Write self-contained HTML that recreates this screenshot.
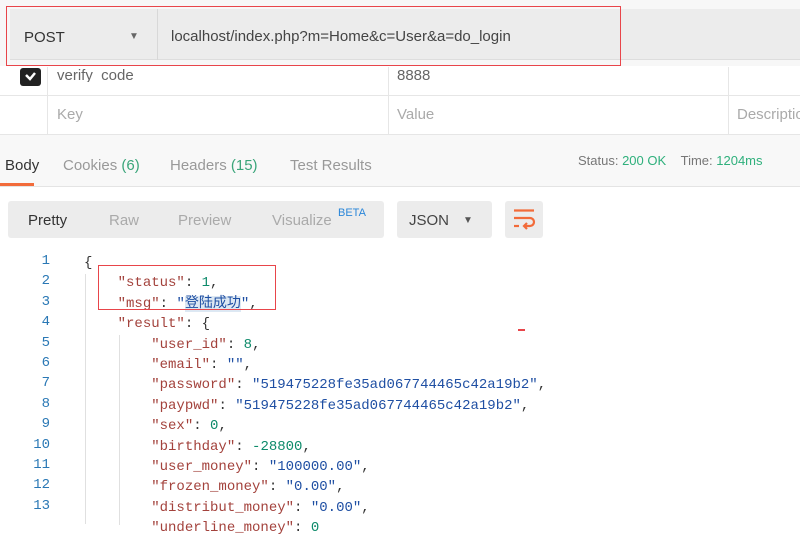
<!DOCTYPE html>
<html><head><meta charset="utf-8">
<style>
*{margin:0;padding:0;box-sizing:border-box}
body{width:800px;height:524px;overflow:hidden;background:#fff;font-family:"Liberation Sans",sans-serif;position:relative}
.abs{position:absolute}
.mono{font-family:"Liberation Mono","Noto Sans CJK SC",monospace;font-size:14px}
.k{color:#a3423c}.s{color:#1f4fa3}.n{color:#0d8a6a}.p{color:#333}
.ln{position:absolute;width:50px;text-align:right;color:#2a78b5;font-family:"Liberation Mono",monospace;font-size:14px}
</style></head><body>
<div class="abs" style="left:0;top:0;width:800px;height:66px;background:#f7f7f7"></div>
<div class="abs" style="left:10px;top:9px;width:790px;height:51px;background:#ececec;border-bottom:1px solid #ddd"></div>
<div class="abs" style="left:157px;top:9px;width:1px;height:51px;background:#d8d8d8"></div>
<div class="abs" style="left:24px;top:29px;font-size:15px;color:#333">POST</div>
<div class="abs" style="left:129px;top:31px;font-size:10px;color:#666">▼</div>
<div class="abs" style="left:171px;top:28px;font-size:15px;color:#444">localhost/index.php?m=Home&amp;c=User&amp;a=do_login</div>
<div class="abs" style="left:6px;top:6px;width:615px;height:60px;border:1.5px solid #e8454a"></div>
<div class="abs" style="left:0;top:95px;width:800px;height:1px;background:#e6e6e6"></div>
<div class="abs" style="left:0;top:134px;width:800px;height:1px;background:#e6e6e6"></div>
<div class="abs" style="left:47px;top:67px;width:1px;height:68px;background:#e6e6e6"></div>
<div class="abs" style="left:388px;top:67px;width:1px;height:68px;background:#e6e6e6"></div>
<div class="abs" style="left:728px;top:67px;width:1px;height:68px;background:#e6e6e6"></div>
<div class="abs" style="left:20px;top:68px;width:21px;height:18px;background:#222;border-radius:3px"></div>
<svg class="abs" style="left:20px;top:68px" width="21" height="18"><path d="M6 7l4 4 5-6" stroke="#fff" stroke-width="2.5" fill="none"/></svg>
<div class="abs" style="left:57px;top:66px;font-size:15px;color:#666;height:16px;overflow:hidden;line-height:16px;padding-top:2px">verify_code</div>
<div class="abs" style="left:397px;top:66px;font-size:15px;color:#666;height:16px;overflow:hidden;line-height:16px;padding-top:2px">8888</div>
<div class="abs" style="left:57px;top:106px;font-size:15px;color:#aaa">Key</div>
<div class="abs" style="left:397px;top:106px;font-size:15px;color:#aaa">Value</div>
<div class="abs" style="left:737px;top:106px;font-size:15px;color:#aaa;white-space:nowrap">Description</div>
<div class="abs" style="left:0;top:135px;width:800px;height:52px;background:#f8f8f8;border-bottom:1px solid #e4e4e4"></div>
<div class="abs" style="left:5px;top:157px;font-size:15px;color:#333">Body</div>
<div class="abs" style="left:0;top:183px;width:34px;height:3px;background:#f26b3a"></div>
<div class="abs" style="left:63px;top:157px;font-size:15px;color:#999">Cookies <span style="color:#3aa57a">(6)</span></div>
<div class="abs" style="left:170px;top:157px;font-size:15px;color:#999">Headers <span style="color:#3aa57a">(15)</span></div>
<div class="abs" style="left:290px;top:157px;font-size:15px;color:#999">Test Results</div>
<div class="abs" style="left:578px;top:153px;font-size:13px;color:#777">Status: <span style="color:#2fb07c">200 OK</span>&nbsp;&nbsp;&nbsp;&nbsp;Time: <span style="color:#2fb07c">1204ms</span></div>
<div class="abs" style="left:8px;top:201px;width:376px;height:37px;background:#ececec;border-radius:3px"></div>
<div class="abs" style="left:28px;top:212px;font-size:15px;color:#333">Pretty</div>
<div class="abs" style="left:109px;top:212px;font-size:15px;color:#aaa">Raw</div>
<div class="abs" style="left:178px;top:212px;font-size:15px;color:#aaa">Preview</div>
<div class="abs" style="left:272px;top:212px;font-size:15px;color:#aaa">Visualize</div>
<div class="abs" style="left:338px;top:207px;font-size:11px;color:#2a86d9">BETA</div>
<div class="abs" style="left:397px;top:201px;width:95px;height:37px;background:#ececec;border-radius:3px"></div>
<div class="abs" style="left:409px;top:212px;font-size:15px;color:#444">JSON</div>
<div class="abs" style="left:463px;top:215px;font-size:10px;color:#555">▼</div>
<div class="abs" style="left:505px;top:201px;width:38px;height:37px;background:#ececec;border-radius:3px"></div>
<svg class="abs" style="left:505px;top:201px" width="38" height="37"><g stroke="#f26b3a" stroke-width="2.2" fill="none"><path d="M9 9.5h20"/><path d="M9 17h16a4 4 0 0 1 0 8h-5"/><path d="M9 25h5"/><path d="M22 22l-3 3 3 3"/></g></svg>
<div class="abs" style="left:85px;top:274px;width:1px;height:250px;background:#e0e0e0"></div>
<div class="abs" style="left:119px;top:335px;width:1px;height:190px;background:#e0e0e0"></div>
<div class="ln" style="top:253px">1</div><div class="ln" style="top:273px">2</div><div class="ln" style="top:294px">3</div><div class="ln" style="top:314px">4</div><div class="ln" style="top:335px">5</div><div class="ln" style="top:355px">6</div><div class="ln" style="top:375px">7</div><div class="ln" style="top:396px">8</div><div class="ln" style="top:416px">9</div><div class="ln" style="top:437px">10</div><div class="ln" style="top:457px">11</div><div class="ln" style="top:477px">12</div><div class="ln" style="top:498px">13</div>
<div class="abs mono p" style="left:84px;top:253px;white-space:pre;line-height:20.4px">{
    <span class="k">"status"</span>: <span class="n">1</span>,
    <span class="k">"msg"</span>: <span class="s">"<span style="background:#dde8f3">登陆成功</span>"</span>,
    <span class="k">"result"</span>: {
        <span class="k">"user_id"</span>: <span class="n">8</span>,
        <span class="k">"email"</span>: <span class="s">""</span>,
        <span class="k">"password"</span>: <span class="s">"519475228fe35ad067744465c42a19b2"</span>,
        <span class="k">"paypwd"</span>: <span class="s">"519475228fe35ad067744465c42a19b2"</span>,
        <span class="k">"sex"</span>: <span class="n">0</span>,
        <span class="k">"birthday"</span>: <span class="n">-28800</span>,
        <span class="k">"user_money"</span>: <span class="s">"100000.00"</span>,
        <span class="k">"frozen_money"</span>: <span class="s">"0.00"</span>,
        <span class="k">"distribut_money"</span>: <span class="s">"0.00"</span>,
        <span class="k">"underline_money"</span>: <span class="n">0</span></div>
<div class="abs" style="left:98px;top:265px;width:178px;height:45px;border:1.5px solid #e8454a"></div>
<div class="abs" style="left:518px;top:329px;width:7px;height:2px;background:#e8454a"></div>
</body></html>
